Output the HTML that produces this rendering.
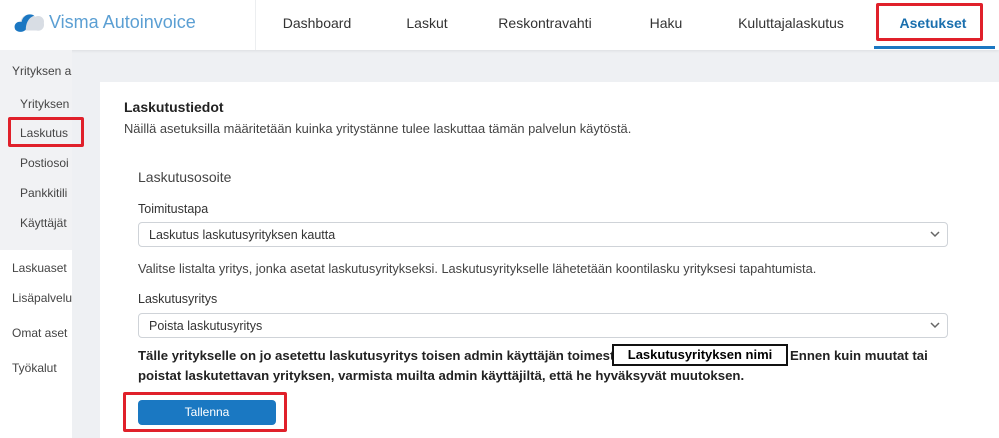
<!DOCTYPE html>
<html><head><meta charset="utf-8"><style>
*{margin:0;padding:0;box-sizing:border-box}
body{width:999px;height:438px;overflow:hidden;background:#eef0f3;font-family:"Liberation Sans",sans-serif;color:#333;position:relative}
.a{position:absolute;white-space:nowrap}
.hdr{position:absolute;left:0;top:0;width:999px;height:50px;background:#fff;box-shadow:0 1px 3px rgba(0,0,0,.08)}
.nav{position:absolute;top:15px;font-size:14px;color:#333;transform:translateX(-50%)}
.side{position:absolute;left:0;top:50px;width:72px;height:388px;background:#fff;overflow:hidden}
.sg{position:absolute;left:0;top:0;width:72px;height:200px;background:#f1f2f4}
.si{position:absolute;font-size:12px;color:#444;white-space:nowrap}
.main{position:absolute;left:100px;top:82px;width:899px;height:356px;background:#fff}
.sel{position:absolute;left:138px;width:810px;height:25px;border:1px solid #cfd3d8;border-radius:4px;background:#fff;font-size:12.5px;color:#333;padding:5px 10px}
.sel svg{position:absolute;right:7px;top:8px}
.red{position:absolute;border:3px solid #e0202a;border-radius:2px}
</style></head><body>
<div class="hdr">
 <svg class="a" style="left:12px;top:9px" width="34" height="26" viewBox="0 0 32 24"><path d="M4 20 C1 18 2 12 8 12 C9 5 17 3 22 7 C26 5 31 8 30 13 C31 18 27 21 23 20 Z" fill="#d8dde4"/><path d="M3 19 C1 14 5 11 9 12 C10 6 16 3 21 6 C15 8 13 14 13 19 C11 22 5 22 3 19 Z" fill="#1b77c2"/></svg>
 <div class="a" style="left:49px;top:12px;font-size:18px;color:#5b9fd3">Visma Autoinvoice</div>
 <div class="a" style="left:255px;top:0;width:1px;height:50px;background:#eceef0"></div>
 <div class="nav" style="left:317px">Dashboard</div>
 <div class="nav" style="left:427px">Laskut</div>
 <div class="nav" style="left:545px">Reskontravahti</div>
 <div class="nav" style="left:666px">Haku</div>
 <div class="nav" style="left:791px">Kuluttajalaskutus</div>
 <div class="nav" style="left:933px;font-weight:bold;color:#1a6fae">Asetukset</div>
 <div class="a" style="left:874px;top:46px;width:121px;height:3px;background:#1b77c2"></div>
 <div class="red" style="left:876px;top:3px;width:107px;height:38px"></div>
</div>
<div class="side">
 <div class="sg"></div>
 <div class="si" style="left:12px;top:14px">Yrityksen a</div>
 <div class="si" style="left:20px;top:47px">Yrityksen</div>
 <div class="si" style="left:20px;top:76px">Laskutus</div>
 <div class="si" style="left:20px;top:106px">Postiosoi</div>
 <div class="si" style="left:20px;top:136px">Pankkitili</div>
 <div class="si" style="left:20px;top:166px">Käyttäjät</div>
 <div class="si" style="left:12px;top:211px">Laskuaset</div>
 <div class="si" style="left:12px;top:241px">Lisäpalvelu</div>
 <div class="si" style="left:12px;top:276px">Omat aset</div>
 <div class="si" style="left:12px;top:311px">Työkalut</div>
</div>
<div class="red" style="left:8px;top:117px;width:76px;height:30px"></div>
<div class="main"></div>
<div class="a" style="left:124px;top:99px;font-size:14px;font-weight:bold;color:#222">Laskutustiedot</div>
<div class="a" style="left:124px;top:121px;font-size:12.9px;color:#444">Näillä asetuksilla määritetään kuinka yritystänne tulee laskuttaa tämän palvelun käytöstä.</div>
<div class="a" style="left:138px;top:169px;font-size:14px;color:#444">Laskutusosoite</div>
<div class="a" style="left:138px;top:202px;font-size:12.5px;color:#333">Toimitustapa</div>
<div class="sel" style="top:222px">Laskutus laskutusyrityksen kautta<svg width="10" height="7" viewBox="0 0 10 7"><path d="M1 1 L5 5 L9 1" stroke="#666" stroke-width="1.5" fill="none"/></svg></div>
<div class="a" style="left:138px;top:261px;font-size:12.8px;color:#444">Valitse listalta yritys, jonka asetat laskutusyritykseksi. Laskutusyritykselle lähetetään koontilasku yrityksesi tapahtumista.</div>
<div class="a" style="left:138px;top:292px;font-size:12.5px;color:#333">Laskutusyritys</div>
<div class="sel" style="top:313px">Poista laskutusyritys<svg width="10" height="7" viewBox="0 0 10 7"><path d="M1 1 L5 5 L9 1" stroke="#666" stroke-width="1.5" fill="none"/></svg></div>
<div class="a" style="left:138px;top:348px;font-size:13.2px;font-weight:bold;color:#222">Tälle yritykselle on jo asetettu laskutusyritys toisen admin käyttäjän toimesta</div>
<div class="a" style="left:790px;top:348px;font-size:13.2px;font-weight:bold;color:#222">Ennen kuin muutat tai</div>
<div class="a" style="left:138px;top:368px;font-size:13.2px;font-weight:bold;color:#222">poistat laskutettavan yrityksen, varmista muilta admin käyttäjiltä, että he hyväksyvät muutoksen.</div>
<div class="a" style="left:612px;top:344px;width:176px;height:22px;border:2px solid #111;background:#fff;font-size:13px;font-weight:bold;color:#000;text-align:center;line-height:18px">Laskutusyrityksen nimi</div>
<div class="a" style="left:138px;top:400px;width:138px;height:25px;background:#1a78c2;border-radius:4px;color:#fff;font-size:12px;text-align:center;line-height:25px">Tallenna</div>
<div class="red" style="left:123px;top:392px;width:164px;height:40px"></div>
</body></html>
